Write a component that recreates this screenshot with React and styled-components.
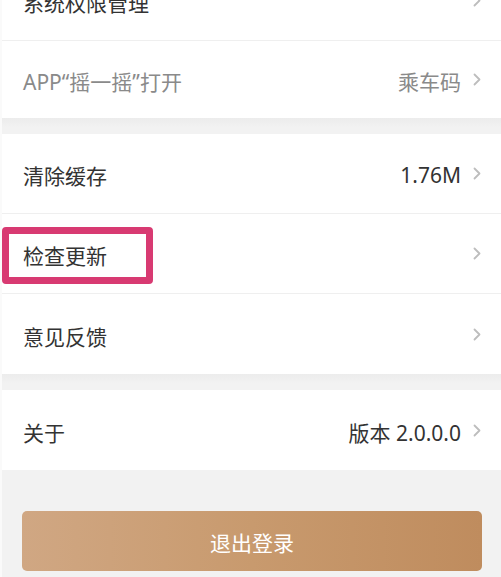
import React from "react";
import styled, { createGlobalStyle } from "styled-components";

const Global = createGlobalStyle`
  html, body { margin: 0; padding: 0; background: #f2f2f2; }
  body { font-family: "Noto Sans", "Noto Sans CJK SC", sans-serif; }
  * { box-sizing: border-box; }
`;

const Page = styled.div`
  width: 501px;
  height: 577px;
  overflow: hidden;
  background: #f2f2f2;
  border-left: 2px solid #fafafa;
`;

const Scroll = styled.div`
  margin-top: -39px;
  display: flex;
  flex-direction: column;
`;

const Group = styled.div`
  background: #fff;
  display: flex;
  flex-direction: column;
`;

const Spacer = styled.div`
  height: 16px;
  background: linear-gradient(#ececec, #f2f2f2 60%);
`;

const Row = styled.div`
  position: relative;
  height: ${(p) => p.$h || 80}px;
  display: flex;
  align-items: center;
  padding: 0 20px 0 21px;
  border-bottom: ${(p) => (p.$last ? "none" : "1px solid #efefef")};
`;

const Label = styled.span`
  flex: 1;
  font-family: "Noto Sans", "Noto Sans CJK SC", sans-serif;
  font-size: 21px;
  color: ${(p) => (p.$muted ? "#8a8a8a" : "#333")};
  padding-top: 3px;
`;

const Value = styled.span`
  font-family: "Noto Sans", "Noto Sans CJK SC", sans-serif;
  font-size: 21px;
  color: ${(p) => (p.$muted ? "#8a8a8a" : "#333")};
  margin-right: 12px;
  padding-top: 3px;
`;

const Highlight = styled.div`
  position: absolute;
  left: 0;
  top: 13px;
  width: 151px;
  height: 57px;
  border: 7px solid #d83a72;
  border-radius: 4px;
  pointer-events: none;
`;

const Footer = styled.div`
  padding: 41px 19px 0 20px;
`;

const LogoutButton = styled.button`
  width: 100%;
  height: 60px;
  border: none;
  border-radius: 5px;
  background: linear-gradient(90deg, #d0a783 0%, #c89a6e 50%, #bf8c5e 100%);
  color: #fff;
  font-family: "Noto Sans CJK SC", sans-serif;
  font-size: 21px;
  padding-top: 2px;
`;

const Chevron = () => (
  <svg width="8" height="13" viewBox="0 0 8 13" fill="none">
    <polyline
      points="1.5,1.5 6.5,6.5 1.5,11.5"
      stroke="#bdbdbd"
      strokeWidth="1.8"
      strokeLinecap="round"
      strokeLinejoin="round"
    />
  </svg>
);

const Item = ({ label, value, muted, valueMuted, last, highlight, h }) => (
  <Row $last={last} $h={h}>
    {highlight && <Highlight />}
    <Label $muted={muted}>{label}</Label>
    {value && <Value $muted={valueMuted}>{value}</Value>}
    <Chevron />
  </Row>
);

export default function App() {
  return (
    <Page>
      <Global />
      <Scroll>
        <Group>
          <Item label="系统权限管理" />
          <Item label="APP“摇一摇”打开" value="乘车码" muted valueMuted last h={77} />
        </Group>
        <Spacer />
        <Group>
          <Item label="清除缓存" value="1.76M" />
          <Item label="检查更新" highlight />
          <Item label="意见反馈" last />
        </Group>
        <Spacer />
        <Group>
          <Item label="关于" value="版本 2.0.0.0" last />
        </Group>
        <Footer>
          <LogoutButton>退出登录</LogoutButton>
        </Footer>
      </Scroll>
    </Page>
  );
}
